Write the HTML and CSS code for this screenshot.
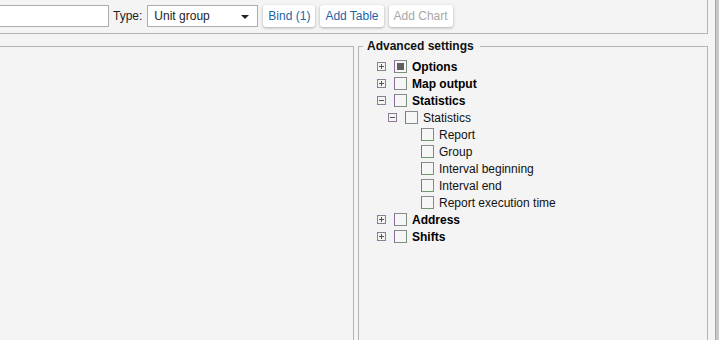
FILE: index.html
```html
<!DOCTYPE html>
<html lang="en">
<head>
  <meta charset="UTF-8">
  <title>Report template</title>
  <link rel="stylesheet" href="styles.css">
</head>
<body>
  <div class="page">
    <div class="main">
      <!-- Toolbar -->
      <div class="toolbar">
        <input type="text" class="name-input">
        <label class="type-label">Type:</label>
        <div class="select">Unit group<span class="caret"></span></div>
        <button class="btn">Bind (1)</button>
        <button class="btn">Add Table</button>
        <button class="btn disabled">Add Chart</button>
      </div>

      <div class="panels">
        <div class="left-panel"></div>

        <fieldset class="settings">
          <legend>Advanced settings</legend>
          <div class="tree">
            <div class="row lvl0"><span class="exp plus"></span><span class="cb checked"></span><b>Options</b></div>
            <div class="row lvl0"><span class="exp plus"></span><span class="cb"></span><b>Map output</b></div>
            <div class="row lvl0"><span class="exp"></span><span class="cb"></span><b>Statistics</b></div>
            <div class="row lvl1"><span class="exp"></span><span class="cb"></span>Statistics</div>
            <div class="row lvl2"><span class="cb leaf"></span>Report</div>
            <div class="row lvl2"><span class="cb leaf"></span>Group</div>
            <div class="row lvl2"><span class="cb leaf"></span>Interval beginning</div>
            <div class="row lvl2"><span class="cb leaf"></span>Interval end</div>
            <div class="row lvl2"><span class="cb leaf"></span>Report execution time</div>
            <div class="row lvl0"><span class="exp plus"></span><span class="cb"></span><b>Address</b></div>
            <div class="row lvl0"><span class="exp plus"></span><span class="cb"></span><b>Shifts</b></div>
          </div>
        </fieldset>
      </div>
    </div>
    <div class="scrollbar"></div>
  </div>
</body>
</html>
```

FILE: styles.css
```css
/* Basic reset */
* {
  margin: 0;
  padding: 0;
  box-sizing: border-box;
}

body {
  font-family: "Liberation Sans", Arial, sans-serif;
  font-size: 12px;
  color: #111;
  background-color: #f4f4f4;
  height: 340px;
  overflow: hidden;
}

.page {
  display: flex;
  height: 340px;
}

.main {
  width: 715px;
}

/* Vertical strip on the right edge */
.scrollbar {
  width: 4px;
  background-color: #c8c8c8;
  border-left: 1px solid #a8a8a8;
}

/* Toolbar */
.toolbar {
  width: 708px;
  height: 34px;
  border-right: 1px solid #b4b4b4;
  border-bottom: 1px solid #b4b4b4;
  display: flex;
  align-items: flex-start;
  padding-top: 5px;
}

.name-input {
  width: 150px;
  height: 22px;
  margin-left: -41px;
  border: 1px solid #adadad;
  background-color: #fff;
  outline: none;
}

.type-label {
  margin-left: 4px;
  margin-right: 5px;
  line-height: 22px;
  color: #222;
}

.select {
  position: relative;
  width: 111px;
  height: 22px;
  line-height: 20px;
  padding-left: 6px;
  border: 1px solid #adadad;
  background-color: #fff;
  color: #222;
}

.caret {
  position: absolute;
  right: 8px;
  top: 9px;
  border-left: 4px solid transparent;
  border-right: 4px solid transparent;
  border-top: 4px solid #222;
}

.btn {
  margin-left: 5px;
  height: 22px;
  padding: 0 5px;
  font-family: inherit;
  font-size: 12px;
  color: #1e64a8;
  background-color: #fff;
  border: none;
  border-radius: 3px;
  box-shadow: 0 1px 3px rgba(0, 0, 0, 0.3);
}

.btn.disabled {
  color: #a8a8a8;
}

/* Panels below toolbar */
.panels {
  display: flex;
  margin-top: 12px;
  height: 300px;
}

.left-panel {
  width: 354px;
  border-top: 1px solid #b4b4b4;
  border-right: 1px solid #b4b4b4;
}

.settings {
  width: 350px;
  margin-left: 4px;
  margin-top: -7px;
  border: 1px solid #b4b4b4;
  border-bottom: none;
  padding: 0 0 0 4px;
}

.settings legend {
  font-weight: bold;
  padding: 0 6px 0 4px;
  color: #111;
}

/* Tree */
.tree {
  margin-left: 14px;
  padding-top: 5px;
}

.row {
  display: flex;
  align-items: center;
  height: 17px;
}

.lvl1 {
  padding-left: 11px;
}

.lvl2 {
  padding-left: 44px;
}

.exp {
  position: relative;
  width: 9px;
  height: 9px;
  margin-right: 8px;
  border: 1px solid #8c7c98;
}

.exp::before {
  content: "";
  position: absolute;
  left: 1px;
  top: 3px;
  width: 5px;
  height: 1px;
  background-color: #555;
}

.exp.plus::after {
  content: "";
  position: absolute;
  left: 3px;
  top: 1px;
  width: 1px;
  height: 5px;
  background-color: #555;
}

.cb {
  position: relative;
  width: 13px;
  height: 13px;
  margin-right: 5px;
  border: 1px solid;
  border-color: #8a8a8a #7c8e7c #7c8e7c #8a6ca2;
  background-color: #f6f6f6;
}

.cb.leaf {
  border-color: #8c8c8c #6f9a6f #6f9a6f #7d6ea8;
}

.cb.checked::after {
  content: "";
  position: absolute;
  left: 2px;
  top: 2px;
  width: 7px;
  height: 7px;
  background-color: #5e5e5e;
}

.row b {
  color: #000;
}
```
